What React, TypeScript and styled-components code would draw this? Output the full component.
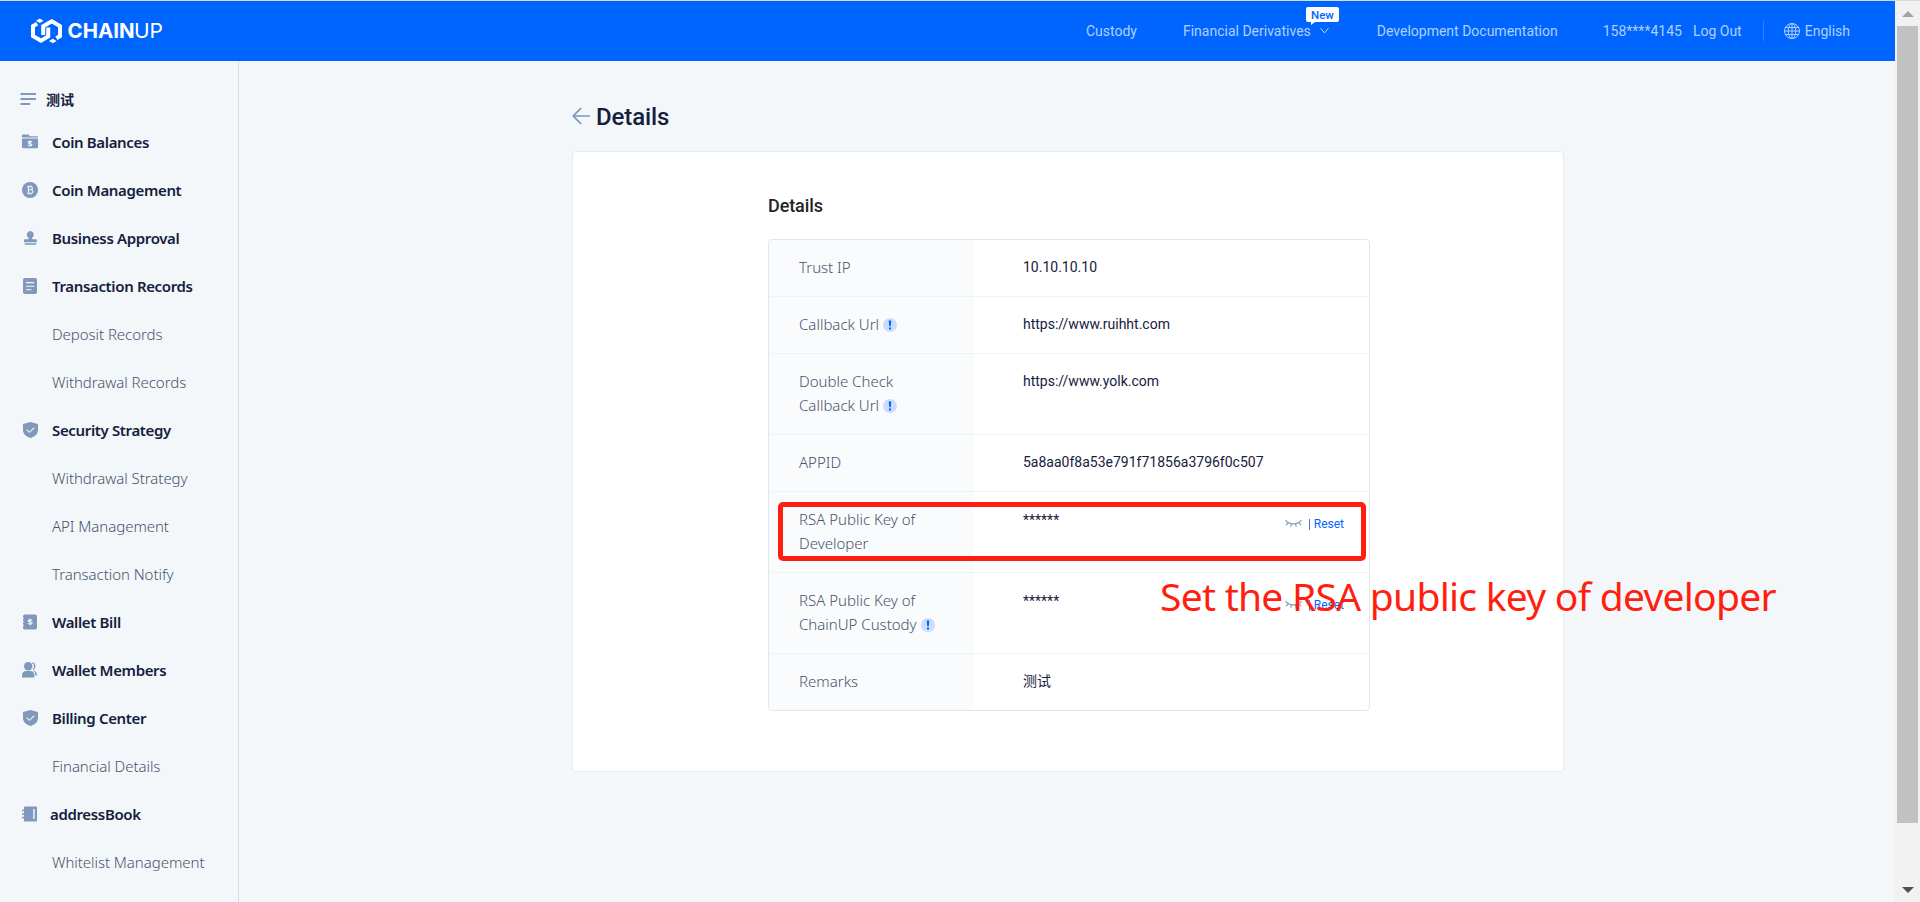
import React from "react";
import styled, { createGlobalStyle } from "styled-components";

const GlobalStyle = createGlobalStyle`
  * { box-sizing: border-box; }
  html, body { margin: 0; padding: 0; overflow: hidden; }
  body { background: #f3f7fa; font-family: Roboto, "Noto Sans CJK SC", sans-serif; color: #15203d; }
`;

const Window = styled.div`
  position: relative;
  display: flex;
  width: 1920px;
  height: 902px;
  border-top: 1px solid #d3dae0;
  overflow: hidden;
`;

const Page = styled.div`
  display: flex;
  flex-direction: column;
  flex: 1;
`;

const Header = styled.header`
  display: flex;
  align-items: center;
  justify-content: space-between;
  height: 60px;
  padding: 0 45px 0 30px;
  background: #0065ff;
`;

const Nav = styled.nav`
  display: flex;
  align-items: center;
  height: 60px;
`;

const NavItem = styled.a<{ $gap?: number }>`
  position: relative;
  display: flex;
  align-items: center;
  margin-left: ${(p) => p.$gap ?? 0}px;
  font-size: 14px;
  line-height: 20px;
  color: #b0cfff;
  white-space: nowrap;
`;

const NewBadge = styled.span`
  position: absolute;
  left: 123px;
  top: -14px;
  width: 33px;
  height: 15px;
  border-radius: 2px;
  background: #fff;
  color: #0065ff;
  font-size: 11.5px;
  font-weight: 500;
  line-height: 16px;
  text-align: center;
  &::after {
    content: "";
    position: absolute;
    left: 5px;
    top: 15px;
    border-top: 3px solid #fff;
    border-right: 4px solid transparent;
  }
`;

const Divider = styled.span`
  width: 1px;
  height: 20px;
  margin-left: 21px;
  background: #2e82ff;
`;

const Body = styled.div`
  display: flex;
  flex: 1;
`;

const Sidebar = styled.aside`
  width: 239px;
  padding-top: 19px;
  border-right: 1px solid #d5deea;
`;

const MenuHead = styled.div`
  display: flex;
  align-items: center;
  height: 38px;
  margin-bottom: 1px;
  padding-left: 20px;
  gap: 10px;
  font-size: 14px;
  font-weight: 700;
`;

const MenuItem = styled.div<{ $tight?: boolean }>`
  display: flex;
  align-items: center;
  gap: ${(p) => (p.$tight ? 12 : 14)}px;
  height: 48px;
  padding: 0 0 3px 22px;
  font-family: "Noto Sans", sans-serif;
  font-size: 15px;
  font-weight: 600;
  letter-spacing: -0.35px;
  white-space: nowrap;
`;

const SubItem = styled.div`
  height: 48px;
  padding-left: 52px;
  font-family: "Noto Sans", sans-serif;
  font-size: 15px;
  font-weight: 300;
  letter-spacing: -0.05px;
  line-height: 47px;
  color: #48536c;
  white-space: nowrap;
`;

const Main = styled.main`
  flex: 1;
  display: flex;
  flex-direction: column;
  padding: 36px 0 0 333px;
`;

const Title = styled.h1`
  display: flex;
  align-items: center;
  gap: 6px;
  height: 40px;
  margin: 0 0 14px;
  font-size: 24px;
  font-weight: 500;
  letter-spacing: -0.1px;
  svg { margin-bottom: 2px; }
`;

const Card = styled.section`
  width: 992px;
  height: 621px;
  padding: 42px 0 0 195px;
  border: 1px solid #e6ebf0;
  border-radius: 4px;
  background: #fff;
`;

const Heading = styled.h2`
  margin: 0 0 21px;
  font-size: 18px;
  font-weight: 500;
  line-height: 24px;
  letter-spacing: -0.1px;
  color: #212529;
`;

const Table = styled.div`
  width: 602px;
  border: 1px solid #e3e6eb;
  border-radius: 4px;
  overflow: hidden;
`;

const TableRow = styled.div`
  display: flex;
  border-bottom: 1px solid #eff2f6;
  &:last-child { border-bottom: 0; }
`;

const LabelCell = styled.div`
  width: 204px;
  padding: 15px 30px 17px;
  background: #fafbfd;
  font-family: "Noto Sans", sans-serif;
  font-size: 15px;
  font-weight: 300;
  line-height: 24px;
  color: #48536c;
  white-space: pre-line;
`;

const ValueCell = styled.div<{ $secret?: boolean }>`
  flex: 1;
  display: flex;
  align-items: flex-start;
  justify-content: space-between;
  padding: ${(p) => (p.$secret ? 16 : 15)}px 25px 16px 50px;
  font-size: 14px;
  line-height: 24px;
`;

const InfoDot = styled.span`
  display: inline-flex;
  align-items: center;
  justify-content: center;
  width: 14px;
  height: 14px;
  margin-left: 4px;
  border-radius: 50%;
  background: #ccdcff;
  vertical-align: -2px;
`;

const Actions = styled.div`
  display: flex;
  align-items: center;
  padding-top: 4px;
  font-size: 12px;
  color: #0065ff;
`;

const Bar = styled.span`
  width: 1px;
  height: 11px;
  margin: 0 4px 0 7px;
  background: #4b70ff;
`;

const Scrollbar = styled.div`
  display: flex;
  flex-direction: column;
  align-items: center;
  width: 25px;
  background: #f1f1f1;
`;

const ScrollButton = styled.div<{ $down?: boolean }>`
  display: flex;
  align-items: center;
  justify-content: center;
  height: 25px;
  margin-top: ${(p) => (p.$down ? "auto" : "0")};
  color: ${(p) => (p.$down ? "#505050" : "#a3a3a3")};
`;

const Thumb = styled.div`
  width: 21px;
  height: 797px;
  background: #c1c1c1;
`;

const HighlightBox = styled.div`
  position: absolute;
  left: 778px;
  top: 501px;
  width: 588px;
  height: 59px;
  border: 5px solid #ff1f10;
  border-radius: 5px;
`;

const Note = styled.div`
  position: absolute;
  left: 1160px;
  top: 569px;
  font-family: "Noto Sans", sans-serif;
  font-size: 39px;
  line-height: 52px;
  letter-spacing: -0.74px;
  color: #ff1f10;
  white-space: nowrap;
`;

const C = "#7f98bb";
const L = "#f3f7fa";

const Logo = () => (
  <svg width="134" height="26" viewBox="30 18 134 26">
    <g fill="none" stroke="#fff" strokeWidth="4">
      <path d="M37.2 23.6L33 26.1V36.1L41 40.7L48.2 36.4V27.5" />
      <path d="M43.2 35V26.2L51.8 21.2L60 26.1V36.1L56.4 38.2" />
    </g>
    <path d="M39.8 18.6l3.7 2.2-3.7 2.3-3.8-2.3z M52.8 38.8l3.8 2.2-3.8 2.3-3.8-2.3z" fill="#fff" />
    <g fill="#fff" fontFamily="Inter, sans-serif" fontSize="20">
      <text x="67.5" y="38.2" fontWeight="700" textLength="67" lengthAdjust="spacingAndGlyphs">CHAIN</text>
      <text x="134" y="38.2" fontWeight="400" textLength="29" lengthAdjust="spacingAndGlyphs">UP</text>
    </g>
  </svg>
);

const Chevron = styled.svg`margin-left: 9px;`;

const Globe = styled.svg`margin-right: 5px;`;

const icons: Record<string, React.ReactNode> = {
  folder: (
    <>
      <path d="M0 1.600V1a.6.6 0 0 1 .6-.6h5.600a1 1 0 0 1 .9.6l.6 1.300h7.600a.7.7 0 0 1 .7.7v.6H0z M0 4.500h16v8.700a1 1 0 0 1-1 1H1a1 1 0 0 1-1-1z" fill={C} />
      <path d="M10 8c-.5-.8-3.800-1-3.800.5s3.700.7 3.700 2.200-3.300 1.300-4 .3M8 6.300v6.400" stroke={L} fill="none" strokeWidth="1.100" />
    </>
  ),
  bitcoin: (
    <>
      <circle cx="8" cy="8" r="8" fill={C} />
      <path d="M5 4.800h3.700c2.300 0 2.300 3 0 3H6.300h2.700c2.600 0 2.600 3.500 0 3.500H5M6.400 4.800v6.500M7.200 3.500v1.300M9 3.500v1.300M7.200 11.300v1.300M9 11.300v1.300" stroke={L} fill="none" strokeWidth="1.100" />
    </>
  ),
  stamp: (
    <path d="M8.300 1a3.600 3.600 0 0 1 2 6.500c-.3.500-.2 1.500.3 1.800h3c1 0 1.200.6 1.200 1.200v1.800H2v-1.800c0-.7.300-1.200 1.200-1.200h3c.5-.3.500-1.300.1-1.800A3.600 3.600 0 0 1 8.300 1z M2.700 13.300h11.500v1.500H2.700z" fill={C} />
  ),
  doc: (
    <>
      <rect x="1" width="14" height="16" rx="1.800" fill={C} />
      <path d="M4 4.600h8.200M4 8.200h8.200M4 11.700h5.600" stroke={L} strokeWidth="1.100" />
    </>
  ),
  shield: (
    <>
      <path d="M8.500 0L16 2v6c0 4.400-4 7-7.500 8C5 15 1 12.400 1 8V2z" fill={C} />
      <path d="M4.700 7.700l2.700 2.600 5-4.600" stroke={L} strokeWidth="1.100" fill="none" />
    </>
  ),
  bill: (
    <>
      <rect x="1" y=".5" width="14" height="15" rx="1.800" fill={C} />
      <path d="M0 4.500h1.800M0 7.900h1.800M0 11.400h1.800" stroke={L} strokeWidth="1.200" />
      <path d="M10.200 6.500c-.6-.9-4-.9-4 .4s4 .8 4 2.200-3.400 1.400-4.200.2M8.100 4.700v6.600" stroke={L} fill="none" strokeWidth="1.100" />
    </>
  ),
  members: (
    <>
      <circle cx="6.200" cy="4.200" r="4.200" fill={C} />
      <path d="M0 15.500v-2.300C0 10.500 2 9 4.200 9h3.900c2.500 0 4.200 1.600 4.200 4.200v2.300z" fill={C} />
      <path d="M10.300.9c3.200.8 3.400 5 .6 6.400" stroke={C} strokeWidth="1.400" fill="none" />
      <path d="M11.500 8.300c2.200 1 3.500 2.600 3.500 5.100h-1.700c0-1.900-.7-3.500-1.800-4.500z" fill={C} />
    </>
  ),
  book: (
    <>
      <rect x="2" y=".5" width="13" height="15" rx="1" fill={C} />
      <path d="M0 4.500h3M0 8h3M0 11.500h3" stroke={C} strokeWidth="1.300" />
      <path d="M11.900 3v10" stroke={L} strokeWidth="1.500" />
    </>
  ),
};

const MenuIcon = ({ name }: { name: string }) => (
  <svg width="16" height="16" viewBox="0 0 16 16">{icons[name]}</svg>
);

const Info = () => (
  <InfoDot>
    <svg width="14" height="14" viewBox="0 0 14 14">
      <path d="M5.700 2.400h2.600L7.800 8.300H6.200z M6 9.500h2v2H6z" fill="#0065ff" />
    </svg>
  </InfoDot>
);

const KeyActions = () => (
  <Actions>
    <svg width="17" height="10" viewBox="0 0 17 10" fill="none" stroke="#8aa0c0" strokeWidth="1.200">
      <path d="M.6 1.200C4 6.200 13 6.200 16.400 1.200M3.300 3.600L1 6.200M6.500 5L5.700 7.800M10.500 5l.8 2.800M13.700 3.600L16 6.200" />
    </svg>
    <Bar />
    Reset
  </Actions>
);

const menu: { text: string; icon?: string; tight?: boolean }[] = [
  { text: "Coin Balances", icon: "folder" },
  { text: "Coin Management", icon: "bitcoin" },
  { text: "Business Approval", icon: "stamp" },
  { text: "Transaction Records", icon: "doc" },
  { text: "Deposit Records" },
  { text: "Withdrawal Records" },
  { text: "Security Strategy", icon: "shield" },
  { text: "Withdrawal Strategy" },
  { text: "API Management" },
  { text: "Transaction Notify" },
  { text: "Wallet Bill", icon: "bill" },
  { text: "Wallet Members", icon: "members" },
  { text: "Billing Center", icon: "shield" },
  { text: "Financial Details" },
  { text: "addressBook", icon: "book", tight: true },
  { text: "Whitelist Management" },
];

const rows: { label: string; value: string; info?: boolean; secret?: boolean }[] = [
  { label: "Trust IP", value: "10.10.10.10" },
  { label: "Callback Url", value: "https://www.ruihht.com", info: true },
  { label: "Double Check\nCallback Url", value: "https://www.yolk.com", info: true },
  { label: "APPID", value: "5a8aa0f8a53e791f71856a3796f0c507" },
  { label: "RSA Public Key of\nDeveloper", value: "******", secret: true },
  { label: "RSA Public Key of\nChainUP Custody", value: "******", info: true, secret: true },
  { label: "Remarks", value: "测试" },
];

export default function App() {
  return (
    <Window>
      <GlobalStyle />
      <Page>
        <Header>
          <Logo />
          <Nav>
            <NavItem>Custody</NavItem>
            <NavItem $gap={46}>
              Financial Derivatives
              <Chevron width="9" height="8" viewBox="0 0 9 8" fill="none" stroke="#b0cfff">
                <path d="M.5 1l4 5 4-5" />
              </Chevron>
              <NewBadge>New</NewBadge>
            </NavItem>
            <NavItem $gap={48}>Development Documentation</NavItem>
            <NavItem $gap={45}>158****4145</NavItem>
            <NavItem $gap={11}>Log Out</NavItem>
            <Divider />
            <NavItem $gap={20}>
              <Globe width="16" height="16" viewBox="0 0 16 16" fill="none" stroke="#b0cfff">
                <circle cx="8" cy="8" r="7.500" />
                <ellipse cx="8" cy="8" rx="3.800" ry="7.500" />
                <path d="M8 .5v15M.5 8h15M1.700 4.500h12.600M1.700 11.500h12.600" />
              </Globe>
              English
            </NavItem>
          </Nav>
        </Header>
        <Body>
          <Sidebar>
            <MenuHead>
              <svg width="16" height="14" viewBox="0 0 16 14" stroke={C} strokeWidth="1.800">
                <path d="M.5 2h15.500M.5 7h15.500M.5 12h9.500" />
              </svg>
              测试
            </MenuHead>
            {menu.map((m) =>
              m.icon ? (
                <MenuItem key={m.text} $tight={m.tight}>
                  <MenuIcon name={m.icon} />
                  {m.text}
                </MenuItem>
              ) : (
                <SubItem key={m.text}>{m.text}</SubItem>
              )
            )}
          </Sidebar>
          <Main>
            <Title>
              <svg width="18" height="18" viewBox="0 0 18 18" fill="none" stroke={C} strokeWidth="1.700">
                <path d="M9 1.200L1.200 9 9 16.800M1.200 9H18" />
              </svg>
              Details
            </Title>
            <Card>
              <Heading>Details</Heading>
              <Table>
                {rows.map((r) => (
                  <TableRow key={r.label}>
                    <LabelCell>
                      {r.label}
                      {r.info && <Info />}
                    </LabelCell>
                    <ValueCell $secret={r.secret}>
                      {r.value}
                      {r.secret && <KeyActions />}
                    </ValueCell>
                  </TableRow>
                ))}
              </Table>
            </Card>
          </Main>
        </Body>
      </Page>
      <Scrollbar>
        <ScrollButton>
          <svg width="12" height="6" viewBox="0 0 12 6"><path d="M6 0l6 6H0z" fill="currentColor" /></svg>
        </ScrollButton>
        <Thumb />
        <ScrollButton $down>
          <svg width="12" height="6" viewBox="0 0 12 6"><path d="M0 0h12L6 6z" fill="currentColor" /></svg>
        </ScrollButton>
      </Scrollbar>
      <HighlightBox />
      <Note>Set the RSA public key of developer</Note>
    </Window>
  );
}
